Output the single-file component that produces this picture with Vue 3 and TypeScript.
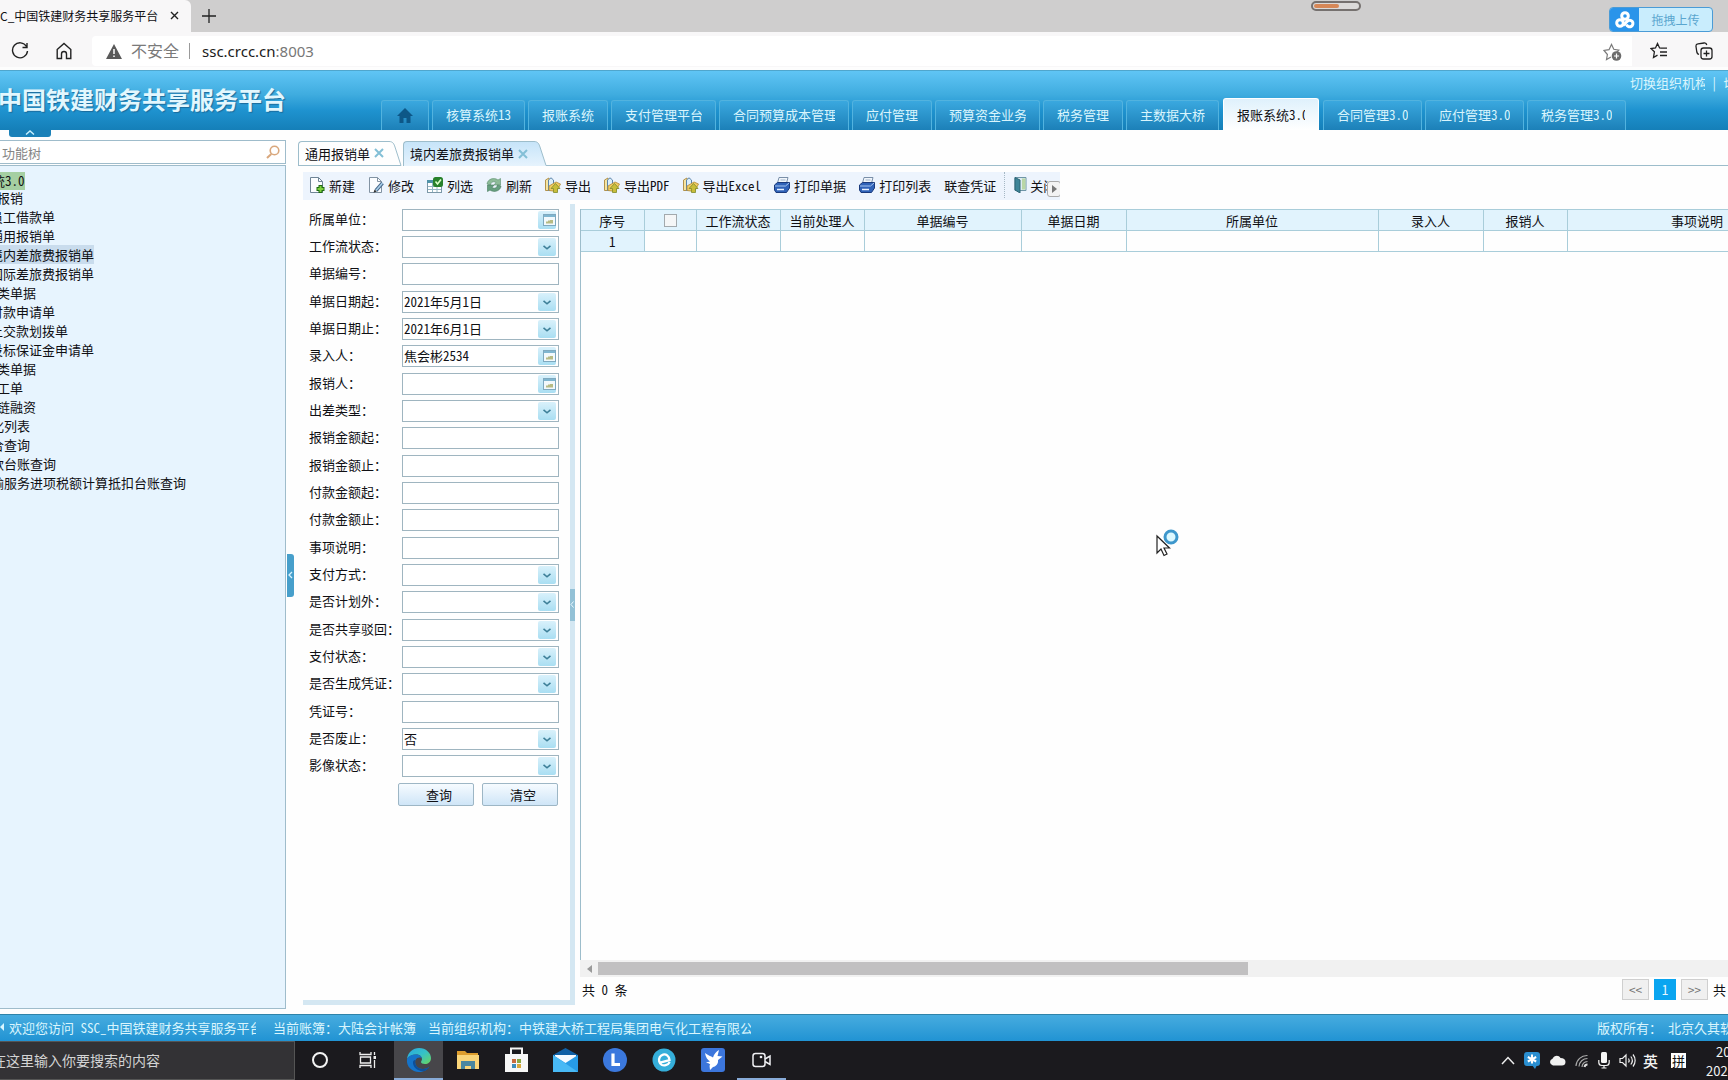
<script setup lang="ts">
import { ref } from 'vue'

interface SystemTab { label: string; width: number; active?: boolean }
interface TreeRow { label: string; level: 'root' | 'group' | 'leaf' | 'entry'; current?: boolean }
interface ToolItem { label: string; icon: 'new' | 'edit' | 'columns' | 'refresh' | 'export' | 'print' | '' }
interface Field { id: string; label: string; kind: 'text' | 'select' | 'date' | 'lookup'; value: string }
interface Column { label: string; width: number }

const systemTabs: SystemTab[] = [
  { label: '核算系统13', width: 93 },
  { label: '报账系统', width: 80 },
  { label: '支付管理平台', width: 105 },
  { label: '合同预算成本管理', width: 130 },
  { label: '应付管理', width: 80 },
  { label: '预算资金业务', width: 105 },
  { label: '税务管理', width: 80 },
  { label: '主数据大桥', width: 93 },
  { label: '报账系统3.0', width: 96, active: true },
  { label: '合同管理3.0', width: 99 },
  { label: '应付管理3.0', width: 99 },
  { label: '税务管理3.0', width: 99 },
]

const tree: TreeRow[] = [
  { label: '统3.0', level: 'root' },
  { label: '报销', level: 'group' },
  { label: '员工借款单', level: 'leaf' },
  { label: '通用报销单', level: 'leaf' },
  { label: '境内差旅费报销单', level: 'leaf', current: true },
  { label: '国际差旅费报销单', level: 'leaf' },
  { label: '类单据', level: 'group' },
  { label: '付款申请单', level: 'leaf' },
  { label: '上交款划拨单', level: 'leaf' },
  { label: '投标保证金申请单', level: 'leaf' },
  { label: '类单据', level: 'group' },
  { label: '工单', level: 'group' },
  { label: '链融资', level: 'group' },
  { label: '化列表', level: 'entry' },
  { label: '合查询', level: 'entry' },
  { label: '款台账查询', level: 'entry' },
  { label: '输服务进项税额计算抵扣台账查询', level: 'entry' },
]

const tools: ToolItem[] = [
  { label: '新建', icon: 'new' },
  { label: '修改', icon: 'edit' },
  { label: '列选', icon: 'columns' },
  { label: '刷新', icon: 'refresh' },
  { label: '导出', icon: 'export' },
  { label: '导出PDF', icon: 'export' },
  { label: '导出Excel', icon: 'export' },
  { label: '打印单据', icon: 'print' },
  { label: '打印列表', icon: 'print' },
  { label: '联查凭证', icon: '' },
]

const fields = ref<Field[]>([
  { id: 'unit', label: '所属单位', kind: 'lookup', value: '' },
  { id: 'flow', label: '工作流状态', kind: 'select', value: '' },
  { id: 'code', label: '单据编号', kind: 'text', value: '' },
  { id: 'from', label: '单据日期起', kind: 'date', value: '2021年5月1日' },
  { id: 'to', label: '单据日期止', kind: 'date', value: '2021年6月1日' },
  { id: 'clerk', label: '录入人', kind: 'lookup', value: '焦会彬2534' },
  { id: 'claimant', label: '报销人', kind: 'lookup', value: '' },
  { id: 'trip', label: '出差类型', kind: 'select', value: '' },
  { id: 'claimMin', label: '报销金额起', kind: 'text', value: '' },
  { id: 'claimMax', label: '报销金额止', kind: 'text', value: '' },
  { id: 'payMin', label: '付款金额起', kind: 'text', value: '' },
  { id: 'payMax', label: '付款金额止', kind: 'text', value: '' },
  { id: 'matter', label: '事项说明', kind: 'text', value: '' },
  { id: 'payWay', label: '支付方式', kind: 'select', value: '' },
  { id: 'offPlan', label: '是否计划外', kind: 'select', value: '' },
  { id: 'rejected', label: '是否共享驳回', kind: 'select', value: '' },
  { id: 'payState', label: '支付状态', kind: 'select', value: '' },
  { id: 'voucher', label: '是否生成凭证', kind: 'select', value: '' },
  { id: 'voucherNo', label: '凭证号', kind: 'text', value: '' },
  { id: 'void', label: '是否废止', kind: 'select', value: '否' },
  { id: 'image', label: '影像状态', kind: 'select', value: '' },
])

const columns: Column[] = [
  { label: '序号', width: 63 },
  { label: '', width: 52 },
  { label: '工作流状态', width: 84 },
  { label: '当前处理人', width: 84 },
  { label: '单据编号', width: 157 },
  { label: '单据日期', width: 105 },
  { label: '所属单位', width: 252 },
  { label: '录入人', width: 105 },
  { label: '报销人', width: 84 },
  { label: '事项说明', width: 260 },
]
</script>

<template>
  <div class="screen">
    <!-- Browser -->
    <div class="tabstrip">
      <div class="browser-tab">
        <span class="browser-title">C_中国铁建财务共享服务平台</span>
        <svg width="9" height="9" viewBox="0 0 9 9" fill="none" stroke="#222" stroke-width="1.4"><path d="M1 1l7 7M8 1L1 8" /></svg>
      </div>
      <svg class="plus" width="14" height="14" viewBox="0 0 14 14" fill="none" stroke="#222" stroke-width="1.3"><path d="M7 0v14M0 7h14" /></svg>
      <svg class="pill" width="50" height="10" viewBox="0 0 50 10">
        <rect x="1" y="1" width="48" height="8" rx="4" fill="#dcdad9" stroke="#76716f" stroke-width="2" />
        <rect x="3" y="3" width="25" height="4" rx="2" fill="#d68757" />
      </svg>
      <div class="upload">
        <span class="upload-mark">
          <svg width="20" height="18" viewBox="0 0 20 18" fill="none" stroke="#fff" stroke-width="3"><circle cx="10" cy="5" r="3.3" /><circle cx="5" cy="12" r="3.3" /><path d="M11.500 13.500A3.300 3.300 0 1 0 12 10.500L8 14.500" /></svg>
        </span>
        <span class="upload-text">拖拽上传</span>
      </div>
    </div>

    <div class="addressbar">
      <div class="nav-icons">
        <svg width="18" height="18" viewBox="0 0 18 18" fill="none" stroke="#222" stroke-width="1.4"><path d="M15.500 4.500A7.500 7.500 0 1 0 16.500 9M16 1v4.500h-4.500" /></svg>
        <svg width="18" height="18" viewBox="0 0 18 18" fill="none" stroke="#222" stroke-width="1.4"><path d="M2.200 7.500L9 1.500l6.800 6V16.500h-4.300v-4.500a2.500 2.500 0 0 0-5 0v4.500H2.200z" /></svg>
      </div>
      <div class="address">
        <svg width="16" height="15" viewBox="0 0 16 15"><path d="M8 0L16 15H0z" fill="#5a5a5a" /><path d="M8 5v5M8 11.500v1.500" stroke="#fff" stroke-width="1.500" /></svg>
        <span class="insecure">不安全</span>
        <span class="bar"></span>
        <span class="url">ssc.crcc.cn<span class="port">:8003</span></span>
        <svg class="star-add" width="19" height="19" viewBox="0 0 19 19" fill="none" stroke="#7a7a7a" stroke-width="1.2">
          <path d="M8 15l-4.500 2.500.9-5L1 8.500l5-.8L8.500 2.500l2.300 4.800 5 .8-2 2" />
          <circle cx="13.500" cy="14" r="4.800" fill="#6c6c6c" stroke="none" /><path d="M13.500 11.500v5M11 14h5" stroke="#fff" />
        </svg>
      </div>
      <div class="side-icons">
        <svg width="18" height="18" viewBox="0 0 18 18" fill="none" stroke="#222" stroke-width="1.3"><path d="M11 6.200L9.600 6 7.500 1.500 5.500 6 1 6.500l3.400 3.300-.9 5.700 4-2.400M11 6.200h6M10 10h7M10 13.500h7" /></svg>
        <svg width="18" height="18" viewBox="0 0 18 18" fill="none" stroke="#222" stroke-width="1.3"><rect x="6" y="6" width="11" height="11" rx="2.500" /><path d="M11.500 8.500v6M8.500 11.500h6M4 12.500C2.500 12 2 11 1.800 10L1 4.500C.8 3 1.500 2 3 1.800L9 1c1.500-.2 2.500.5 2.800 2" /></svg>
      </div>
    </div>

    <!-- Application header -->
    <header class="banner">
      <h1>中国铁建财务共享服务平台</h1>
      <div class="account">
        <a class="org" href="#">切换组织机构</a><span>|</span><a href="#">切换</a>
      </div>
      <nav class="systems">
        <a class="system home" href="#" aria-label="首页">
          <svg width="16" height="15" viewBox="0 0 16 15"><path d="M8 0L0 8h2.500v7h4V10h3v5h4V8H16z" fill="#0d5787" /></svg>
        </a>
        <a v-for="s in systemTabs" :key="s.label" href="#" class="system" :class="{ active: s.active }" :style="{ width: s.width + 'px' }">
          <span>{{ s.label }}</span>
        </a>
      </nav>
    </header>

    <main class="body">
      <aside class="side">
        <button class="fold" aria-label="收起">
          <svg width="10" height="5" viewBox="0 0 10 5" fill="none" stroke="#c9f1ff" stroke-width="1.4"><path d="M1 4.500L5 1l4 3.500" /></svg>
        </button>
        <label class="search">
          <input type="text" placeholder="功能树" />
          <svg width="14" height="14" viewBox="0 0 14 14" fill="none" stroke="#d9a77c" stroke-width="1.600"><circle cx="8.500" cy="5.500" r="4.300" /><path d="M5.300 9L1 13" stroke-width="2" /></svg>
        </label>
        <ul class="tree">
          <li v-for="(row, i) in tree" :key="i" :class="row.level"><span :class="{ current: row.current }">{{ row.label }}</span></li>
        </ul>
      </aside>
      <div class="gutter">
        <button class="grip" aria-label="折叠">
          <svg width="5" height="8" viewBox="0 0 5 8" fill="none" stroke="#d9f4ff" stroke-width="1.300"><path d="M4 1L1 4l3 3" /></svg>
        </button>
      </div>

      <section class="content">
        <div class="pages">
          <div class="page-tab">
            <div class="page-body"><span>通用报销单</span>
              <svg class="x" width="10" height="10" viewBox="0 0 10 10" stroke="#83bfd6" stroke-width="2"><path d="M1 1l8 8M9 1L1 9" /></svg>
            </div>
            <svg class="slope" width="18" height="25" viewBox="0 0 18 25" fill="none"><path d="M0 .5h4C8 .5 9 3 10 6l6 18.500H0" stroke="#9dbdcb" /></svg>
          </div>
          <div class="page-tab on">
            <div class="page-body"><span>境内差旅费报销单</span>
              <svg class="x" width="10" height="10" viewBox="0 0 10 10" stroke="#83bfd6" stroke-width="2"><path d="M1 1l8 8M9 1L1 9" /></svg>
            </div>
            <svg class="slope" width="18" height="25" viewBox="0 0 18 25"><defs><linearGradient id="tabfill" x1="0" y1="0" x2="0" y2="1"><stop offset="0" stop-color="#c6e4f9" /><stop offset="1" stop-color="#e6f3fd" /></linearGradient></defs><path d="M0 .5h4C8 .5 9 3 10 6l6 18.500V25H0z" fill="url(#tabfill)" /><path d="M0 .5h4C8 .5 9 3 10 6l6 18.500H18" fill="none" stroke="#9dbdcb" /></svg>
          </div>
          <div class="rule"></div>
        </div>

        <div class="tools">
          <button v-for="t in tools" :key="t.label" class="tool">
            <svg v-if="t.icon" width="16" height="16" viewBox="0 0 16 16" fill="none">
              <g v-if="t.icon === 'new'"><path d="M1.500.5h8l4 4v11h-12z" fill="#fbfdff" stroke="#6f8496" /><path d="M9.500.5v4h4" stroke="#6f8496" /><path d="M11.500 8v8M7.500 12h8" stroke="#1e6a12" stroke-width="4" /><path d="M11.500 9v6M8.500 12h6" stroke="#7fd13f" stroke-width="2" /></g>
              <g v-if="t.icon === 'edit'"><path d="M1.500.5h8l4 4v11h-12z" fill="#fbfdff" stroke="#8293a3" /><path d="M9.500.5v4h4" stroke="#8293a3" /><path d="M14.500 6L8 13.500" stroke="#48688c" stroke-width="3.500" /><path d="M14.500 6L8 13.500" stroke="#a9d0ea" stroke-width="1.500" /><path d="M5.500 15.800l1-3.300 2.300 2z" fill="#333" /></g>
              <g v-if="t.icon === 'columns'"><rect x=".5" y="3.500" width="14" height="12" fill="#fff" stroke="#7c98a8" /><rect x="0" y="3" width="15" height="3" fill="#4e92a8" /><path d="M1 9.500h13M1 12.500h13M5.500 6v9M10 6v9" stroke="#93b7c4" /><rect x="6" y="0" width="10" height="10" rx="2.500" fill="#27812b" /><path d="M8.500 4.500l2 2.500 3.500-4.500" stroke="#dcffc9" stroke-width="1.600" /></g>
              <g v-if="t.icon === 'refresh'"><path d="M1 7C1.500 2 8 0 12 3L14.500 1.500V8H8l2-2.500C7.500 4 5 5 4.500 8z" fill="#8dbb98" stroke="#5c8f70" stroke-width=".6" /><path d="M15 9c-.5 5-7 7-11 4L1.500 14.500V8H8L6 10.500c2.500 1.500 5 .5 5.500-2.500z" fill="#669f7f" stroke="#46795c" stroke-width=".6" /></g>
              <g v-if="t.icon === 'export'"><path d="M.5 3L4 1v12.500H.5z" fill="#f6e4a0" stroke="#b3924a" /><path d="M3.500 13.500V3L6 .8 8.500 3v9z" fill="#dbeefa" stroke="#5c83a8" /><path d="M4 13.500V9l7-4 4.500 2-4 7.500z" fill="#f0cb62" stroke="#b18a35" stroke-width=".8" /><path d="M8.500 15.500v-4H6L10.500 6.500 15 11.500h-2.500v4z" fill="#c9bd3a" stroke="#7d8b2b" stroke-width=".8" /></g>
              <g v-if="t.icon === 'print'"><path d="M5 .5h9l-2 7.500H3z" fill="#f1f6fb" stroke="#7a8fa8" /><path d="M6.500 3h5M6 5.500h5" stroke="#9fb3c8" /><path d="M.5 8l3-2.500h12v5.500l-3 4.500H2L.5 13z" fill="#2f62b8" stroke="#1a3a7c" /><path d="M1 9h10.500l3.500-3" stroke="#a6c6f2" /><path d="M3 12.500h7" stroke="#e9f2ff" stroke-width="1.500" /></g>
            </svg>
            <span>{{ t.label }}</span>
          </button>
          <span class="divider"></span>
          <button class="tool close">
            <svg width="13" height="16" viewBox="0 0 13 16"><path d="M1 .5h11v13H1z" fill="#dcebf1" stroke="#6e95a7" /><path d="M1 .5l5 2.500v13L1 13z" fill="#3e8598" stroke="#2c6475" /><path d="M8 1.500h3.500v11H8z" fill="#b9d6a6" /></svg>
            <span>关闭</span>
          </button>
          <button class="more" aria-label="更多"><svg width="5" height="8" viewBox="0 0 5 8"><path d="M0 0l5 4-5 4z" fill="#777" /></svg></button>
        </div>

        <div class="work">
          <form class="filter" @submit.prevent>
            <div v-for="f in fields" :key="f.id" class="row">
              <label :for="f.id">{{ f.label }}：</label>
              <div class="box">
                <select v-if="f.kind === 'select'" :id="f.id" v-model="f.value">
                  <option>{{ f.value }}</option>
                </select>
                <input v-else :id="f.id" v-model="f.value" type="text" />
                <span v-if="f.kind === 'select' || f.kind === 'date'" class="drop">
                  <svg width="8" height="5" viewBox="0 0 8 5" fill="none" stroke="#3d7f98" stroke-width="1.600"><path d="M.5 .8L4 3.800 7.500 .8" /></svg>
                </span>
                <span v-if="f.kind === 'lookup'" class="drop find">
                  <svg width="13" height="12" viewBox="0 0 13 12"><rect x=".5" y=".5" width="12" height="11" fill="#f2f9fc" stroke="#7fa9bf" /><path d="M1 2h11" stroke="#7fb6d0" stroke-width="2" /><path d="M3 9.500V7.500h2v-1h2v-.500h3v3.500z" fill="#b7bb84" /></svg>
                </span>
              </div>
            </div>
            <div class="actions">
              <button type="submit">查询</button>
              <button type="reset">清空</button>
            </div>
          </form>
          <div class="splitter"><span><svg width="4" height="7" viewBox="0 0 4 7" fill="none" stroke="#e9f8ff"><path d="M3.500 .5L1 3.500l2.500 3" /></svg></span></div>

          <div class="grid">
            <div class="grid-view">
              <table>
                <colgroup><col v-for="(c, i) in columns" :key="i" :style="{ width: c.width + 'px' }" /></colgroup>
                <thead>
                  <tr>
                    <th v-for="(c, i) in columns" :key="i">
                      <input v-if="i === 1" type="checkbox" aria-label="全选" /><template v-else>{{ c.label }}</template>
                    </th>
                  </tr>
                </thead>
                <tbody>
                  <tr><th>1</th><td v-for="n in 9" :key="n"></td></tr>
                </tbody>
              </table>
            </div>
            <div class="hscroll">
              <svg width="5" height="8" viewBox="0 0 5 8"><path d="M5 0v8L0 4z" fill="#9a9a9a" /></svg>
              <span class="thumb"></span>
            </div>
            <div class="pager">
              <span class="total">共 0 条</span>
              <button>&lt;&lt;</button>
              <button class="now">1</button>
              <button>&gt;&gt;</button>
              <span>共</span>
            </div>
          </div>
        </div>
      </section>
    </main>

    <footer class="status">
      <svg width="5" height="10" viewBox="0 0 5 10"><path d="M0 5l4-4v8z" fill="#d9f6ff" /></svg>
      <span class="welcome">欢迎您访问 SSC_中国铁建财务共享服务平台</span>
      <span class="book">当前账簿：大陆会计帐簿</span>
      <span class="company">当前组织机构：中铁建大桥工程局集团电气化工程有限公</span>
      <span class="rights">版权所有：</span>
      <span class="vendor">北京久其软件</span>
    </footer>

    <!-- Desktop taskbar -->
    <div class="taskbar">
      <label class="task-search"><input type="text" placeholder="在这里输入你要搜索的内容" /></label>
      <button class="task" aria-label="Cortana"><svg width="18" height="18" viewBox="0 0 18 18" fill="none" stroke="#f3f3f3" stroke-width="2"><circle cx="9" cy="9" r="7" /></svg></button>
      <button class="task views" aria-label="任务视图"><svg width="18" height="18" viewBox="0 0 18 18" fill="none" stroke="#eee" stroke-width="1.300"><path d="M1 1v2.500h11V1M1 17v-2.500h11V17M1.500 6h10v6h-10zM15.500 1v3M15.500 9v8" /><rect x="14.500" y="5" width="2.500" height="3" fill="#eee" stroke="none" /></svg></button>
      <button class="task open" aria-label="Edge">
        <svg width="26" height="26" viewBox="0 0 26 26"><defs><linearGradient id="edge" x1="0" y1="0" x2="1" y2="1"><stop offset="0" stop-color="#2aa7e0" /><stop offset=".5" stop-color="#35c1c8" /><stop offset="1" stop-color="#6bd65c" /></linearGradient></defs><path d="M1 12C2 5 7 1 13 1c7 0 12 5 12 10 0 4-3 6-6 6-2.500 0-4-1-4-2 0-.8 1-1.200 1-3 0-2.500-2.500-4.500-6-4.500C6 7.500 3 9 1 12z" fill="url(#edge)" /><path d="M1 12c2-3.500 5-4.500 9-4.500 3.500 0 6 2 6 4.500 0-2-5-2.500-6.500 1-1.500 4 1.500 9 7.500 9 3 0 5-1 6.500-2.500C21 23.500 17 25 13 25 6 25 0 19.500 1 12z" fill="#1573c9" /><path d="M9.500 13c-1.500 4 1.500 9 7.500 9 3 0 5-1 6.500-2.500-1 1.800-2.800 3.500-5 4.500C12 25 6.500 20 7 15c.3-1.500 1.200-2 2.500-2z" fill="#0d4f9a" /></svg>
      </button>
      <button class="task" aria-label="文件"><svg width="22" height="20" viewBox="0 0 22 20"><path d="M0 1h8l2 2h11v4H0z" fill="#dd9d2d" /><path d="M0 5h22v14H0z" fill="#fad579" /><path d="M4 19v-8h14v8h-4v-3H8v3z" fill="#4a87a0" /></svg></button>
      <button class="task" aria-label="商店"><svg width="23" height="26" viewBox="0 0 23 26"><path d="M6 7V1.500h11V7" fill="none" stroke="#f4f4f4" stroke-width="2" /><path d="M0 7h23v18H0z" fill="#f7f7f7" /><path d="M7 12h4v4H7z" fill="#c96b3e" /><path d="M12 12h4v4h-4z" fill="#8aa842" /><path d="M7 17h4v4H7z" fill="#3e8dbb" /><path d="M12 17h4v4h-4z" fill="#d9a83a" /></svg></button>
      <button class="task" aria-label="邮件"><svg width="25" height="24" viewBox="0 0 25 24"><path d="M0 7l12.500-7L25 7v8H0z" fill="#1160a5" /><path d="M2 7h21v9H2z" fill="#f7fbff" /><path d="M0 7l12.500 8L25 7v17H0z" fill="#279be6" /><path d="M0 7l25 17H0z" fill="#48b9f5" /></svg></button>
      <button class="task" aria-label="L"><svg width="24" height="24" viewBox="0 0 24 24"><circle cx="12" cy="12" r="12" fill="#3b78dd" /><path d="M10 5.500v11h7" fill="none" stroke="#fff" stroke-width="3.200" /></svg></button>
      <button class="task" aria-label="浏览器"><svg width="24" height="24" viewBox="0 0 24 24"><circle cx="12" cy="12" r="11.500" fill="#35aeda" /><path d="M6.500 13.500h10.800C18 9 15.500 6.500 12.500 6.500S7 9 7 12.200s2.200 5.300 5.300 5.300c2 0 3.500-.7 4.700-2" fill="none" stroke="#fff" stroke-width="2.300" transform="rotate(-15 12 12)" /></svg></button>
      <button class="task" aria-label="飞鸟"><svg width="24" height="24" viewBox="0 0 24 24"><rect width="24" height="24" rx="3" fill="#3c76dc" /><path d="M4 5c3 2.500 6 3 8 4.500C13 6 15.500 3.500 18 2l-1.500 6 5 .5-4.500 3.500c.5 4-2 6.500-5 7L9 22l-.5-4.500C10 17 9 15.500 5 14.500l4-1C6.500 12 4.500 9 4 5z" fill="#fff" /></svg></button>
      <button class="task running" aria-label="录屏"><svg width="20" height="16" viewBox="0 0 20 16" fill="none" stroke="#f0f0f4" stroke-width="1.500"><rect x="1" y="1.500" width="12" height="13" rx="2.500" /><path d="M13 7l5-3v8.500l-5-3" /><circle cx="9" cy="5" r=".6" fill="#fff" /></svg></button>
      <div class="tray">
        <svg width="14" height="9" viewBox="0 0 14 9" fill="none" stroke="#eee" stroke-width="1.500"><path d="M1 8l6-6.500L13 8" /></svg>
        <svg width="16" height="17" viewBox="0 0 16 17"><rect width="16" height="14" rx="3" fill="#2a8ed0" /><path d="M8 13h5l-2 4z" fill="#2a8ed0" /><path d="M8 2.500v9M3.800 5l8.400 4.500M12.200 5L3.800 9.500" stroke="#fff" stroke-width="2" /></svg>
        <svg width="17" height="11" viewBox="0 0 17 11"><path d="M4 10.500a3.500 3.500 0 0 1-.500-6.800C5 .5 9.500-.5 11.500 3c3 0 5 1.500 5 4s-1.500 3.500-3.500 3.500z" fill="#f1f1f1" /></svg>
        <svg width="14" height="14" viewBox="0 0 14 14" fill="none" stroke="#ddd" stroke-width="1.200"><path d="M1 12A11 11 0 0 1 12.500 1.500M4 12.500a8.500 8.500 0 0 1 8.500-8M7 13a6 6 0 0 1 5.500-5.500" stroke="#aaa" /><path d="M9.500 13a3 3 0 0 1 3-2.500" stroke-width="2" /></svg>
        <svg width="12" height="17" viewBox="0 0 12 17"><rect x="3" y="0" width="6" height="11" rx="1.500" fill="#f6f6f6" /><path d="M.8 8v2.500c0 2 1.200 3 3 3h4.400c1.800 0 3-1 3-3V8M6 13.500V16M3.500 16h5" fill="none" stroke="#f6f6f6" stroke-width="1.200" /></svg>
        <svg width="17" height="15" viewBox="0 0 17 15" fill="none" stroke="#eee" stroke-width="1.200"><path d="M1 5.500h2.500L7 2v11L3.500 9.500H1zM9.500 5.500a3.500 3.500 0 0 1 0 4M11.800 3.500a6.500 6.500 0 0 1 0 8M14 1.500a9.500 9.500 0 0 1 0 12" /></svg>
        <span class="lang">英</span>
        <span class="ime">拼</span>
        <div class="clock"><span class="time">20:</span><span>2021</span></div>
      </div>
    </div>

    <svg class="pointer" width="26" height="30" viewBox="0 0 26 30">
      <circle cx="15" cy="8" r="6" fill="#dcf8ff" stroke="#3d97cc" stroke-width="3" />
      <path d="M1 7v17l4-4 3 6.500 3-1.500-3-6h5.500z" fill="#fff" stroke="#222" stroke-width="1.200" />
    </svg>
  </div>
</template>

<style>
html, body { margin: 0; overflow: hidden; }
</style>

<style scoped>
.screen {
  position: relative;
  display: flex;
  flex-direction: column;
  min-height: 100vh;
  overflow: hidden;
  background: #fefefe;
  color: #101014;
  font-family: "Noto Sans Mono CJK SC", "Noto Sans CJK SC", sans-serif;
  font-size: 13px;
  line-height: 19px;
}
.screen * { box-sizing: border-box; }
button, input, select { font: inherit; color: inherit; margin: 0; padding: 0; border: 0; background: none; border-radius: 0; outline: none; min-width: 0; }
a { color: inherit; text-decoration: none; }
svg { flex: none; display: block; }

.tabstrip { display: flex; height: 32px; background: #cfcece; font-family: "Noto Sans CJK SC", sans-serif; }
.browser-tab { display: flex; align-items: center; justify-content: space-between; width: 191px; padding: 0 12px 2px 0; background: #f8f7f8; border-radius: 0 6px 0 0; font-size: 12px; }
.browser-title { white-space: nowrap; }
.plus { margin: 9px 0 0 11px; }
.pill { margin: 1px 248px 0 auto; }
.upload { display: flex; width: 104px; height: 25px; margin: 7px 15px 0 0; border: 1px solid #4a9bd6; border-radius: 4px; overflow: hidden; background: #c9edfd; }
.upload-mark { display: flex; align-items: center; justify-content: center; width: 29px; background: #2a94ea; }
.upload-text { flex: 1; text-align: center; font-size: 12px; line-height: 23px; color: #5aa6cf; }

.addressbar { display: flex; align-items: center; height: 38px; padding-top: 3px; background: #f8f7f8; border-bottom: 3px solid #fdfdfd; font-family: "Noto Sans", "Noto Sans CJK SC", sans-serif; }
.nav-icons { display: flex; gap: 26px; width: 92px; padding-left: 11px; }
.address { display: flex; flex: 1; align-items: center; height: 30px; padding-left: 14px; border-radius: 4px 0 0 4px; background: #fff; }
.insecure { margin-left: 9px; font-size: 16px; color: #7a7a7a; }
.bar { width: 1px; height: 16px; margin: 0 12px 0 10px; background: #9a9a9a; }
.url { font-size: 15px; color: #1a1a1a; }
.port { color: #777; }
.star-add { margin: 0 10px 0 auto; }
.side-icons { display: flex; gap: 27px; padding: 0 15px 0 18px; }

.banner { display: grid; grid-template-columns: 381px minmax(0, 1fr); grid-template-rows: 27px 32px; border-top: 1px solid #4fa6cd; background: linear-gradient(#60c5f5 0%, #3facdf 40%, #1f93d0 66%, #157fb8 100%); color: #d9f5fd; }
h1 { grid-row: 1 / 3; margin: 0 0 0 -2px; padding-top: 11px; font-family: "Noto Sans CJK SC", sans-serif; font-size: 24px; line-height: 34px; font-weight: 700; white-space: nowrap; color: #e2f7fe; text-shadow: 1px 1px 1px #1a6b9c; }
.account { display: flex; justify-self: end; gap: 6px; width: 98px; padding-top: 2px; overflow: hidden; white-space: nowrap; }
.org { flex: none; width: 75px; overflow: hidden; }
.systems { display: flex; align-items: flex-end; gap: 3px; overflow: hidden; }
.system { display: flex; flex: none; height: 30px; padding: 4px 13px 0; border: 1px solid #52b3df; border-bottom: 0; border-radius: 3px 3px 0 0; background: linear-gradient(#3aa8df, #1c80b8); white-space: nowrap; }
.system span { flex: 1; overflow: hidden; }
.home { width: 48px; padding: 7px 15px 0; }
.active { height: 32px; margin: 0 1px 0 1px; padding-top: 6px; border-color: #fff; background: linear-gradient(#dff1fc, #fff); color: #101014; }

.body { display: flex; flex: 1; }
.side { display: flex; flex-direction: column; width: 286px; padding-bottom: 5px; }
.fold { display: flex; justify-content: center; width: 42px; height: 7px; margin: 0 0 3px 9px; border-radius: 0 0 3px 3px; background: #1b81b8; }
.search { display: flex; align-items: center; height: 24px; padding-right: 5px; border: 1px solid #9fbccb; border-left: 0; background: #fff; }
.search input { flex: 1; padding-left: 2px; color: #777; }
.search input::placeholder { color: #858585; opacity: 1; }
.tree { flex: 1; margin: 1px 0 0; padding: 6px 0 0; overflow: hidden; list-style: none; border: 1px solid #9fbccb; border-left: 0; background: #e7f4fe; white-space: nowrap; }
.tree span { display: inline-block; }
.tree .root { height: 18px; margin: 0 0 -2px -8px; line-height: 18px; }
.root span { background: #a5cfa2; }
.group { margin-left: -3px; }
.leaf { margin-left: -10px; }
.entry { margin-left: -9px; }
.current { background: #c9dced; }
.gutter { display: flex; align-items: center; width: 12px; padding-top: 6px; }
.grip { display: flex; align-items: center; justify-content: center; width: 7px; height: 43px; margin-left: 1px; border-radius: 0 3px 3px 0; background: #479fcb; }

.content { display: flex; flex: 1; flex-direction: column; min-width: 0; padding-top: 11px; }
.pages { display: flex; height: 25px; }
.page-tab { display: flex; width: 105px; }
.page-body { display: flex; flex: 1; align-items: center; gap: 4px; padding: 0 0 1px 6px; border: 1px solid #9dbdcb; border-right: 0; border-radius: 4px 0 0 0; white-space: nowrap; }
.page-tab.on { width: 145px; }
.on .page-body { border-bottom: 0; background: linear-gradient(#c6e4f9, #e6f3fd); }
.rule { flex: 1; border-bottom: 1px solid #9dbdcb; }
.tools { display: flex; align-items: center; gap: 13px; width: 757px; height: 28px; margin: 6px 0 4px 5px; padding: 0 0 2px 6px; overflow: hidden; background: #edf4fd; white-space: nowrap; }
.tool { display: flex; flex: none; align-items: center; gap: 4px; }
.divider { flex: none; width: 1px; height: 26px; margin: 0 -4px 0 -5px; border-left: 1px dotted #a5b8c4; }
.close { width: 34px; overflow: hidden; gap: 3px; }
.more { display: flex; flex: none; align-items: center; justify-content: center; width: 14px; height: 16px; margin: 8px 0 0 -14px; border: 1px solid #aaa; border-radius: 3px; background: #f3f3f3; }

.work { display: flex; flex: 1; min-height: 0; }
.filter { width: 272px; margin: 0 0 9px 5px; padding: 5px 0 0 6px; border-bottom: 5px solid #d4e7f2; flex: none; }
.row { display: flex; align-items: center; height: 22px; margin-bottom: 5px; }
.row:nth-child(3n) { margin-bottom: 6px; }
.row label { width: 93px; margin-top: -4px; white-space: nowrap; }
.box { display: flex; align-items: center; width: 157px; height: 22px; padding-right: 2px; border: 1px solid #9fb5c0; background: #fff; }
.box input, .box select { flex: 1; padding-left: 1px; appearance: none; line-height: 20px; }
.drop { display: flex; align-items: center; justify-content: center; width: 18px; height: 18px; border-radius: 2px; background: linear-gradient(#d9f1fb, #a9def2); }
.find { justify-content: flex-end; }
.actions { display: flex; gap: 8px; margin-left: 89px; }
.actions button { width: 76px; height: 23px; padding-left: 6px; border: 1px solid #9db6c5; border-radius: 2px; background: linear-gradient(#f6fbff, #cfe5f7); line-height: 19px; }
.splitter { display: flex; align-items: center; width: 5px; margin: 0 5px 9px -5px; background: #d4e7f2; }
.splitter span { display: flex; align-items: center; height: 32px; width: 5px; background: #93c1d6; }

.grid { display: flex; flex: 1; flex-direction: column; min-width: 0; padding: 5px 0 9px; }
.grid-view { flex: 1; overflow: hidden; border-left: 1px solid #9dbdcb; }
table { width: 1246px; table-layout: fixed; border-collapse: collapse; }
th, td { height: 21px; padding: 0; border: 1px solid #a9cdda; line-height: 19px; text-align: center; }
th { background: #e1f3fd; font-weight: 500; }
tr > :first-child { border-left: 0; }
th input { display: block; width: 13px; height: 13px; margin: 0 auto; appearance: none; border: 1px solid #a3a9ad; background: #f5f6f7; }
.hscroll { display: flex; align-items: center; height: 17px; padding-left: 7px; background: #f1f1f1; }
.thumb { width: 57%; height: 13px; margin-left: 6px; background: #c1c0c1; }
.pager { display: flex; align-items: center; gap: 5px; height: 28px; padding: 0 2px 3px 2px; }
.total { margin-right: auto; }
.pager button { width: 27px; height: 21px; border: 1px solid #cfcfcf; background: #f0f0f0; color: #777; line-height: 17px; }
.pager .now { width: 22px; border-color: #0aa5f0; background: #0aa5f0; color: #e6f7ff; }

.status { display: flex; align-items: center; height: 27px; padding-bottom: 2px; border-top: 1px solid #2f83a9; background: linear-gradient(#47acdf, #2193d3); color: #d9f5fd; white-space: nowrap; overflow: hidden; }
.status span { flex: none; overflow: hidden; }
.welcome { width: 247px; margin: 0 17px 0 4px; }
.book { width: 143px; margin-right: 12px; }
.company { width: 323px; margin-right: auto; }
.rights { width: 71px; }
.vendor { width: 60px; }

.taskbar { display: flex; height: 39px; background: #1b1a1e; color: #f2f2f2; font-family: "Noto Sans CJK SC", sans-serif; overflow: hidden; }
.task-search { display: flex; width: 295px; border: 1px solid #555; border-left: 0; background: #333235; }
.task-search input { flex: 1; margin-left: -8px; font-size: 14px; }
.task-search input::placeholder { color: #d4d4d4; opacity: 1; }
.task { display: flex; flex: none; align-items: center; justify-content: center; width: 49px; border-bottom: 2px solid transparent; }
.task.views { width: 50px; padding-right: 3px; }
.task.open { border-color: #88abd8; background: #47464a; }
.task.running { border-color: #88abd8; }
.tray { display: flex; flex: none; align-items: center; gap: 9px; width: 227px; margin-left: auto; white-space: nowrap; }
.tray .lang { margin-left: -2px; font-size: 15px; font-weight: 500; }
.tray .ime { flex: none; width: 15px; height: 15px; margin-left: 4px; background: #fff; color: #111; font-size: 13px; line-height: 15px; text-align: center; }
.clock { display: flex; flex: none; flex-direction: column; margin-left: 11px; font-size: 13px; }
.time { padding-left: 10px; }

.pointer { position: absolute; left: 1156px; top: 529px; }
</style>
